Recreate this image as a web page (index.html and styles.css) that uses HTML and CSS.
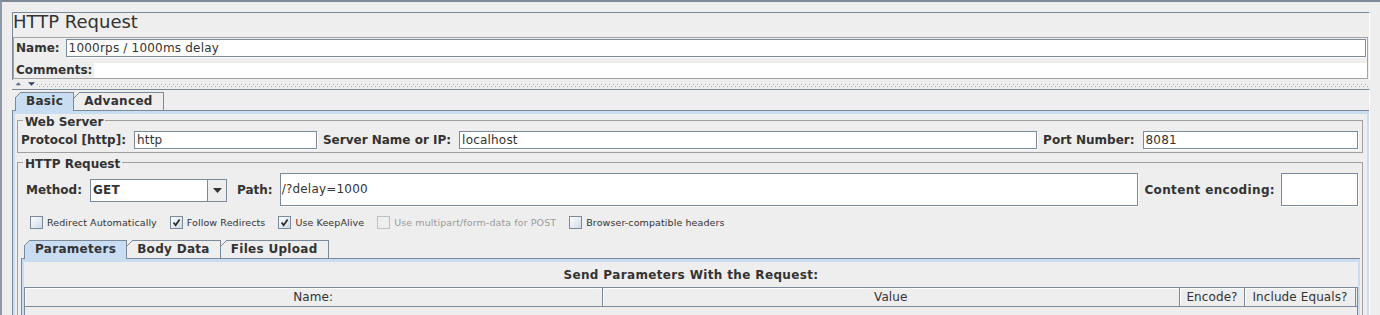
FILE: index.html
```html
<!DOCTYPE html>
<html>
<head>
<meta charset="utf-8">
<title>HTTP Request</title>
<link rel="stylesheet" href="styles.css">
</head>
<body>
<div class="app">
  <section class="title-panel">
    <div class="title">HTTP Request</div>
    <div class="namebox">
      <div class="name-row">
        <span class="lbl">Name:</span>
        <div class="field name-field">1000rps / 1000ms delay</div>
      </div>
      <div class="comments-row">
        <span class="lbl">Comments:</span>
        <div class="comments-area"></div>
      </div>
    </div>
  </section>

  <div class="divider">
    <svg class="split-arrows" width="22" height="5" viewBox="0 0 22 5">
      <polygon points="1.5,3.2 4.3,0.2 7.1,3.2" fill="#5a7090"/>
      <polygon points="14,0.3 21,0.3 17.5,3.8" fill="#2f4160"/>
    </svg>
    <div class="dots"></div>
  </div>

  <section class="bottom-panel">
    <div class="tabs">
      <div class="tab sel">Basic</div>
      <div class="tab">Advanced</div>
    </div>
    <div class="tab-content main-content">
      <fieldset class="group">
        <legend>Web Server</legend>
        <div class="row server-row">
          <span class="lbl">Protocol [http]:</span>
          <div class="field w-proto">http</div>
          <span class="lbl">Server Name or IP:</span>
          <div class="field w-server">localhost</div>
          <span class="lbl">Port Number:</span>
          <div class="field grow">8081</div>
        </div>
      </fieldset>

      <fieldset class="group req">
        <legend>HTTP Request</legend>
        <div class="row method-row">
          <span class="lbl">Method:</span>
          <div class="combo">
            <span class="combo-val">GET</span>
            <span class="combo-btn">
              <svg width="9" height="5" viewBox="0 0 9 5"><polygon points="0,0 9,0 4.5,5" fill="#333"/></svg>
            </span>
          </div>
          <span class="lbl path-lbl">Path:</span>
          <div class="field tall grow">/?delay=1000</div>
          <span class="lbl enc-lbl">Content encoding:</span>
          <div class="field tall w-enc"></div>
        </div>

        <div class="checks">
          <div class="check"><span class="box"></span><span>Redirect Automatically</span></div>
          <div class="check"><span class="box"><svg width="11" height="11" viewBox="0 0 11 11"><polyline points="2.6,5.4 4.6,8.2 8.6,2.4" fill="none" stroke="#2b2b2b" stroke-width="1.7"/></svg></span><span>Follow Redirects</span></div>
          <div class="check"><span class="box"><svg width="11" height="11" viewBox="0 0 11 11"><polyline points="2.6,5.4 4.6,8.2 8.6,2.4" fill="none" stroke="#2b2b2b" stroke-width="1.7"/></svg></span><span>Use KeepAlive</span></div>
          <div class="check disabled"><span class="box"></span><span>Use multipart/form-data for POST</span></div>
          <div class="check"><span class="box"></span><span>Browser-compatible headers</span></div>
        </div>

        <div class="subtabs">
          <div class="tabs">
            <div class="tab sel">Parameters</div>
            <div class="tab">Body Data</div>
            <div class="tab">Files Upload</div>
          </div>
          <div class="tab-content sub-content">
            <div class="params-title">Send Parameters With the Request:</div>
            <div class="table">
              <div class="thead">
                <div class="th">Name:</div>
                <div class="th">Value</div>
                <div class="th">Encode?</div>
                <div class="th">Include Equals?</div>
              </div>
              <div class="tbody"></div>
            </div>
          </div>
        </div>
      </fieldset>
    </div>
  </section>
</div>
</body>
</html>
```

FILE: styles.css
```css
* { box-sizing: border-box; }

html, body {
  margin: 0;
  padding: 0;
}

body {
  width: 1380px;
  height: 315px;
  overflow: hidden;
  background: #eeeeee;
  font-family: "DejaVu Sans", "Noto Sans", sans-serif;
  font-size: 12px;
  color: #333333;
}

.app {
  height: 315px;
  border-top: 2px solid #7b8897;
  border-left: 2px solid #8d99a6;
  padding: 10px 10px 0 10px;
  display: flex;
  flex-direction: column;
}

/* ---------- title panel ---------- */
.title-panel {
  border-top: 1px solid #7a8a99;
  border-left: 1px solid #7a8a99;
  border-right: 1px solid #ffffff;
  padding: 0 1px 1px 0;
}

.title {
  font-size: 18px;
  line-height: 18px;
  height: 18px;
  margin-bottom: 6px;
  white-space: nowrap;
}

.namebox {
  border: 1px solid #a3a3a3;
  padding: 1px 1px 0 2px;
}

.name-row {
  display: flex;
  height: 18px;
}

.name-row .lbl {
  line-height: 19px;
  margin-right: 6px;
}

.name-field {
  flex: 1;
  height: 18px;
}

.comments-row {
  display: flex;
  height: 15px;
  margin-top: 6px;
}

.comments-row .lbl {
  line-height: 15px;
  margin-right: 2px;
}

.comments-area {
  flex: 1;
  background: #ffffff;
  margin-right: -1px;
}

.lbl {
  font-weight: bold;
  white-space: nowrap;
}

/* ---------- split divider ---------- */
.divider {
  height: 9px;
  display: flex;
  padding: 2px 2px 0 2px;
}

.split-arrows {
  flex: none;
  display: block;
}

.dots {
  flex: 1;
  height: 4px;
  margin-top: 1px;
  background:
    linear-gradient(90deg, transparent 1px, #97a5b5 1px 2px, transparent 2px) 0 1px / 4px 1px repeat-x,
    linear-gradient(90deg, transparent 3px, #97a5b5 3px 4px) 0 3px / 4px 1px repeat-x,
    linear-gradient(90deg, #ffffff 1px, transparent 1px) 0 0 / 4px 1px repeat-x,
    linear-gradient(90deg, transparent 2px, #ffffff 2px 3px, transparent 3px) 0 2px / 4px 1px repeat-x;
}

/* ---------- bottom panel / tabs ---------- */
.bottom-panel {
  flex: 1;
  display: flex;
  flex-direction: column;
  border-top: 1px solid #7a8a99;
  border-right: 1px solid #ffffff;
  padding-top: 2px;
  min-height: 0;
}

.tabs {
  display: flex;
  align-items: flex-start;
  padding-left: 3px;
  height: 18px;
}

.tab {
  height: 18px;
  padding: 1px 10px 0 10px;
  line-height: 17px;
  font-weight: bold;
  letter-spacing: 0.3px;
  white-space: nowrap;
  border-right: 1px solid #7a8a99;
  background-color: #eeeeee;
  background-image:
    linear-gradient(135deg, #eeeeee 0 3.7px, #7a8a99 3.7px 4.8px, transparent 4.8px),
    linear-gradient(#7a8a99, #7a8a99);
  background-size: 6px 6px, 100% 1px;
  background-position: 0 0, 5px 0;
  background-repeat: no-repeat;
}

.tab:first-child {
  background-image:
    linear-gradient(135deg, #eeeeee 0 3.7px, #7a8a99 3.7px 4.8px, transparent 4.8px),
    linear-gradient(#7a8a99, #7a8a99),
    linear-gradient(#7a8a99, #7a8a99);
  background-size: 6px 6px, 100% 1px, 1px 100%;
  background-position: 0 0, 5px 0, 0 5px;
  padding-left: 11px;
}

.tab.sel {
  background-color: #c8ddf2;
  height: 19px;
  margin-bottom: -1px;
  position: relative;
  z-index: 1;
}

.tab-content {
  border-top: 1px solid #7a8a99;
  border-left: 1px solid #7a8a99;
  box-shadow:
    inset 2px 0 0 #c8ddf2,
    inset -2px 0 0 #c8ddf2,
    inset 0 3px 0 #c8ddf2;
}

.main-content {
  flex: 1;
  padding: 2px 6px 0 4px;
  min-height: 0;
}

/* ---------- groups ---------- */
.group {
  margin: 0;
  border: 1px solid #a0a0a0;
  padding: 3px 2px 3px 3px;
  min-width: 0;
}

.group legend {
  font-weight: bold;
  font-size: 12px;
  line-height: 12px;
  padding: 3px 2px 0 2px;
  margin-left: 2px;
}

.group.req {
  margin-top: 2px;
  padding-bottom: 0;
}

.row {
  display: flex;
  align-items: center;
}

.server-row {
  height: 18px;
  padding-right: 2px;
}

.server-row .lbl {
  margin-right: 8px;
}

.server-row .field {
  margin-right: 6px;
}

.server-row .field.grow {
  margin-right: 0;
}

.field {
  height: 18px;
  border: 1px solid #7a8a99;
  box-shadow: 1px 1px 0 #ffffff;
  background: #ffffff;
  padding: 0 2px;
  line-height: 16px;
  letter-spacing: 0.2px;
  white-space: nowrap;
  overflow: hidden;
  color: #333333;
}

.w-proto { width: 183px; flex: none; }
.w-server { width: 578px; flex: none; }
.grow { flex: 1; min-width: 0; }

.method-row {
  height: 33px;
  padding-left: 5px;
  padding-right: 2px;
}

.method-row .lbl {
  margin-right: 8px;
}

.combo {
  flex: none;
  width: 137px;
  height: 23px;
  margin-top: 2px;
  border: 1px solid #7a8a99;
  background: #ffffff;
  display: flex;
  margin-right: 10px;
}

.combo-val {
  flex: 1;
  font-weight: bold;
  padding-left: 2px;
  line-height: 21px;
  letter-spacing: 0.2px;
}

.combo-btn {
  width: 19px;
  border-left: 1px solid #7a8a99;
  background: #eeeeee;
  display: flex;
  align-items: center;
  justify-content: center;
}

.combo-btn svg { display: block; }

.method-row .path-lbl { margin-right: 7px; }

.field.tall {
  height: 33px;
  line-height: 31px;
  padding-left: 1px;
}

.method-row .field.grow { margin-right: 6px; }

.method-row .enc-lbl {
  margin-right: 6px;
  letter-spacing: 0.35px;
}

.w-enc { width: 77px; flex: none; }

/* ---------- checkboxes ---------- */
.checks {
  display: flex;
  align-items: center;
  gap: 13px;
  height: 19px;
  margin-top: 7px;
  padding-left: 9px;
  font-size: 9.5px;
  letter-spacing: 0.1px;
}

.check {
  display: flex;
  align-items: center;
  gap: 4px;
  white-space: nowrap;
}

.box {
  width: 13px;
  height: 13px;
  flex: none;
  border: 1px solid #7a8a99;
  background: linear-gradient(135deg, #fdfeff 0%, #e6ecf2 50%, #cfdae6 100%);
  display: flex;
  align-items: center;
  justify-content: center;
}

.box svg { display: block; }

.check.disabled { color: #9a9a9a; }

.check.disabled .box {
  border-color: #b8c2cc;
  background: #eeeeee;
}

/* ---------- sub tabs ---------- */
.subtabs {
  margin-top: 8px;
}

.sub-content {
  padding: 0 2px;
  height: 80px;
}

.params-title {
  text-align: center;
  font-weight: bold;
  letter-spacing: 0.36px;
  padding-top: 4px;
  line-height: 24px;
  height: 28px;
}

.table {
  border-left: 1px solid #7a8a99;
  border-right: 1px solid #7a8a99;
  height: 60px;
}

.thead {
  display: grid;
  grid-template-columns: 1fr 1fr 65px 111px;
  border-top: 1px solid #7a8a99;
  border-bottom: 1px solid #7a8a99;
  height: 20px;
  padding-right: 1px;
}

.th {
  line-height: 18px;
  text-align: center;
  letter-spacing: 0.1px;
  border-right: 1px solid #7a8a99;
  box-shadow: inset 1px 1px 0 #ffffff;
  white-space: nowrap;
  overflow: hidden;
}
```
